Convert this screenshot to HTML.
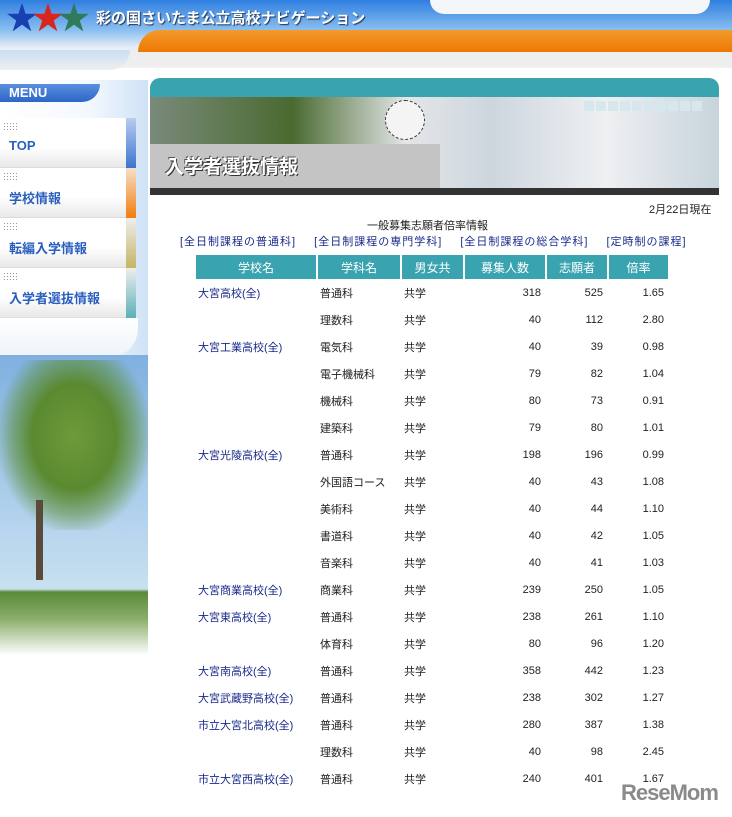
<!DOCTYPE html><html><head><meta charset="utf-8"><style>
*{margin:0;padding:0;box-sizing:border-box}
body{width:732px;height:817px;position:relative;background:#fff;font-family:"Liberation Sans","Noto Sans CJK JP",sans-serif;overflow:hidden}
.a{position:absolute}
.mi{position:absolute;left:0;width:136px;height:50px;background:linear-gradient(#fff,#fff 60%,#e8e8e8);border-bottom:1px solid #ddd}
.mi span{position:absolute;left:9px;top:20px;font-weight:bold;font-size:13px;color:#2a5fbf}
.mi i{position:absolute;left:3px;top:4px;width:14px;height:10px;background-image:radial-gradient(#999 0.6px,transparent 0.8px);background-size:3px 3px}
.mi b{position:absolute;right:0;top:0;width:10px;height:50px}
table{position:absolute;left:194px;top:255px;border-collapse:separate;border-spacing:2px 0;font-size:11px;color:#222}
th{background:#3aa3b0;color:#fff;font-weight:normal;font-size:12px;height:24px}
td{height:27px;padding:0 0 0 2px}
td.n{text-align:right;padding-right:4px}
td a{color:#1a2a8a;text-decoration:none}
</style></head><body>
<!-- header -->
<div class="a" style="left:0;top:0;width:732px;height:68px;background:linear-gradient(#2f7fe0,#8cc0f0 45%,#e8eef5 70%,#f2f2f2)"></div>
<div class="a" style="left:430px;top:-10px;width:280px;height:24px;background:#f4f6fa;border-radius:0 0 14px 14px"></div>
<div class="a" style="left:138px;top:30px;width:594px;height:22px;background:linear-gradient(#f39a2e,#ee7800);border-radius:30px 0 0 0"></div>
<div class="a" style="left:0;top:52px;width:732px;height:14px;background:#eee"></div>
<div class="a" style="left:0;top:50px;width:130px;height:20px;background:linear-gradient(#c8dff5,#eee);border-radius:0 0 30px 0"></div>
<div class="a" style="left:6px;top:1px;font-size:32px;line-height:34px;letter-spacing:-6px"><span style="color:#1a3fb0">★</span><span style="color:#d8261c">★</span><span style="color:#2e7a5a">★</span></div>
<div class="a" style="left:96px;top:7px;font-size:15px;font-weight:bold;color:#fff;text-shadow:1px 1px 1px #235">彩の国さいたま公立高校ナビゲーション</div>
<!-- left column -->
<div class="a" style="left:0;top:80px;width:148px;height:280px;background:linear-gradient(90deg,#fff,#f4f8fd 60%,#cfe2f6)"></div>
<div class="a" style="left:0;top:84px;width:100px;height:18px;background:linear-gradient(#5a8ee0,#2d66c8);border-radius:0 0 20px 0"></div>
<div class="a" style="left:9px;top:85px;font-size:13px;font-weight:bold;color:#fff">MENU</div>
<div class="mi" style="top:118px"><i></i><span>TOP</span><b style="background:linear-gradient(#b8cdef,#3d74d0)"></b></div>
<div class="mi" style="top:168px"><i></i><span>学校情報</span><b style="background:linear-gradient(#f5e0c8,#f27d0c)"></b></div>
<div class="mi" style="top:218px"><i></i><span>転編入学情報</span><b style="background:linear-gradient(#eee,#c4b464)"></b></div>
<div class="mi" style="top:268px"><i></i><span>入学者選抜情報</span><b style="background:linear-gradient(#eee,#5ab0b8)"></b></div>
<div class="a" style="left:0;top:318px;width:138px;height:40px;background:linear-gradient(#fff,#eef3f8);border-radius:0 0 30px 0"></div>
<!-- tree -->
<div class="a" style="left:0;top:355px;width:148px;height:300px;background:linear-gradient(#7fb0e0,#b8d6ee 60%,#c8e0ee 78%,#5a8a3a 79%,#8aae6a 88%,#fff)"></div>
<div class="a" style="left:0;top:360px;width:148px;height:170px;background:radial-gradient(ellipse at 50% 45%,#6e9a3a 0,#5a8a30 40%,rgba(90,140,50,.5) 60%,transparent 75%)"></div>
<div class="a" style="left:36px;top:500px;width:7px;height:80px;background:#5a4a3a"></div>
<!-- banner -->
<div class="a" style="left:150px;top:78px;width:569px;height:20px;background:#3aa3b0;border-radius:10px 10px 0 0"></div>
<div class="a" style="left:150px;top:97px;width:569px;height:91px;background:linear-gradient(90deg,#7a8a7a,#4a6a30 25%,#e4e6e8 45%,#cdd6de 60%,#eef0f2 80%,#c8d4dc)"></div>
<div class="a" style="left:150px;top:144px;width:290px;height:44px;background:#c4c4c4"></div>
<div class="a" style="left:385px;top:100px;width:40px;height:40px;border-radius:50%;background:#f4f4f4;border:1px dashed #333"></div>
<div class="a" style="left:165px;top:152px;font-size:19px;font-weight:bold;color:#fff;text-shadow:1px 1px 0 #333,-1px -1px 0 #555">入学者選抜情報</div>
<div class="a" style="left:584px;top:101px;width:120px;height:10px;background:repeating-linear-gradient(90deg,#d6e8ee 0 10px,transparent 10px 12px)"></div>
<div class="a" style="left:150px;top:188px;width:569px;height:7px;background:#333"></div>
<!-- content -->
<div class="a" style="left:649px;top:201px;font-size:11px;color:#222">2月22日現在</div>
<div class="a" style="left:367px;top:217px;font-size:11px;color:#222">一般募集志願者倍率情報</div>
<div class="a" style="left:180px;top:233px;font-size:11px;color:#1a2a8a;letter-spacing:1px;word-spacing:14px;white-space:nowrap">[全日制課程の普通科] [全日制課程の専門学科] [全日制課程の総合学科] [定時制の課程]</div>
<table>
<tr><th style="width:120px">学校名</th><th style="width:82px">学科名</th><th style="width:61px">男女共</th><th style="width:80px">募集人数</th><th style="width:60px">志願者</th><th style="width:59px">倍率</th></tr>
<tr><td><a>大宮高校(全)</a></td><td>普通科</td><td>共学</td><td class="n">318</td><td class="n">525</td><td class="n">1.65</td></tr>
<tr><td></td><td>理数科</td><td>共学</td><td class="n">40</td><td class="n">112</td><td class="n">2.80</td></tr>
<tr><td><a>大宮工業高校(全)</a></td><td>電気科</td><td>共学</td><td class="n">40</td><td class="n">39</td><td class="n">0.98</td></tr>
<tr><td></td><td>電子機械科</td><td>共学</td><td class="n">79</td><td class="n">82</td><td class="n">1.04</td></tr>
<tr><td></td><td>機械科</td><td>共学</td><td class="n">80</td><td class="n">73</td><td class="n">0.91</td></tr>
<tr><td></td><td>建築科</td><td>共学</td><td class="n">79</td><td class="n">80</td><td class="n">1.01</td></tr>
<tr><td><a>大宮光陵高校(全)</a></td><td>普通科</td><td>共学</td><td class="n">198</td><td class="n">196</td><td class="n">0.99</td></tr>
<tr><td></td><td>外国語コース</td><td>共学</td><td class="n">40</td><td class="n">43</td><td class="n">1.08</td></tr>
<tr><td></td><td>美術科</td><td>共学</td><td class="n">40</td><td class="n">44</td><td class="n">1.10</td></tr>
<tr><td></td><td>書道科</td><td>共学</td><td class="n">40</td><td class="n">42</td><td class="n">1.05</td></tr>
<tr><td></td><td>音楽科</td><td>共学</td><td class="n">40</td><td class="n">41</td><td class="n">1.03</td></tr>
<tr><td><a>大宮商業高校(全)</a></td><td>商業科</td><td>共学</td><td class="n">239</td><td class="n">250</td><td class="n">1.05</td></tr>
<tr><td><a>大宮東高校(全)</a></td><td>普通科</td><td>共学</td><td class="n">238</td><td class="n">261</td><td class="n">1.10</td></tr>
<tr><td></td><td>体育科</td><td>共学</td><td class="n">80</td><td class="n">96</td><td class="n">1.20</td></tr>
<tr><td><a>大宮南高校(全)</a></td><td>普通科</td><td>共学</td><td class="n">358</td><td class="n">442</td><td class="n">1.23</td></tr>
<tr><td><a>大宮武蔵野高校(全)</a></td><td>普通科</td><td>共学</td><td class="n">238</td><td class="n">302</td><td class="n">1.27</td></tr>
<tr><td><a>市立大宮北高校(全)</a></td><td>普通科</td><td>共学</td><td class="n">280</td><td class="n">387</td><td class="n">1.38</td></tr>
<tr><td></td><td>理数科</td><td>共学</td><td class="n">40</td><td class="n">98</td><td class="n">2.45</td></tr>
<tr><td><a>市立大宮西高校(全)</a></td><td>普通科</td><td>共学</td><td class="n">240</td><td class="n">401</td><td class="n">1.67</td></tr>
</table>
<div class="a" style="left:621px;top:780px;font-size:22px;font-weight:bold;color:#8a8a8a;letter-spacing:-1px">ReseMom</div>
</body></html>
